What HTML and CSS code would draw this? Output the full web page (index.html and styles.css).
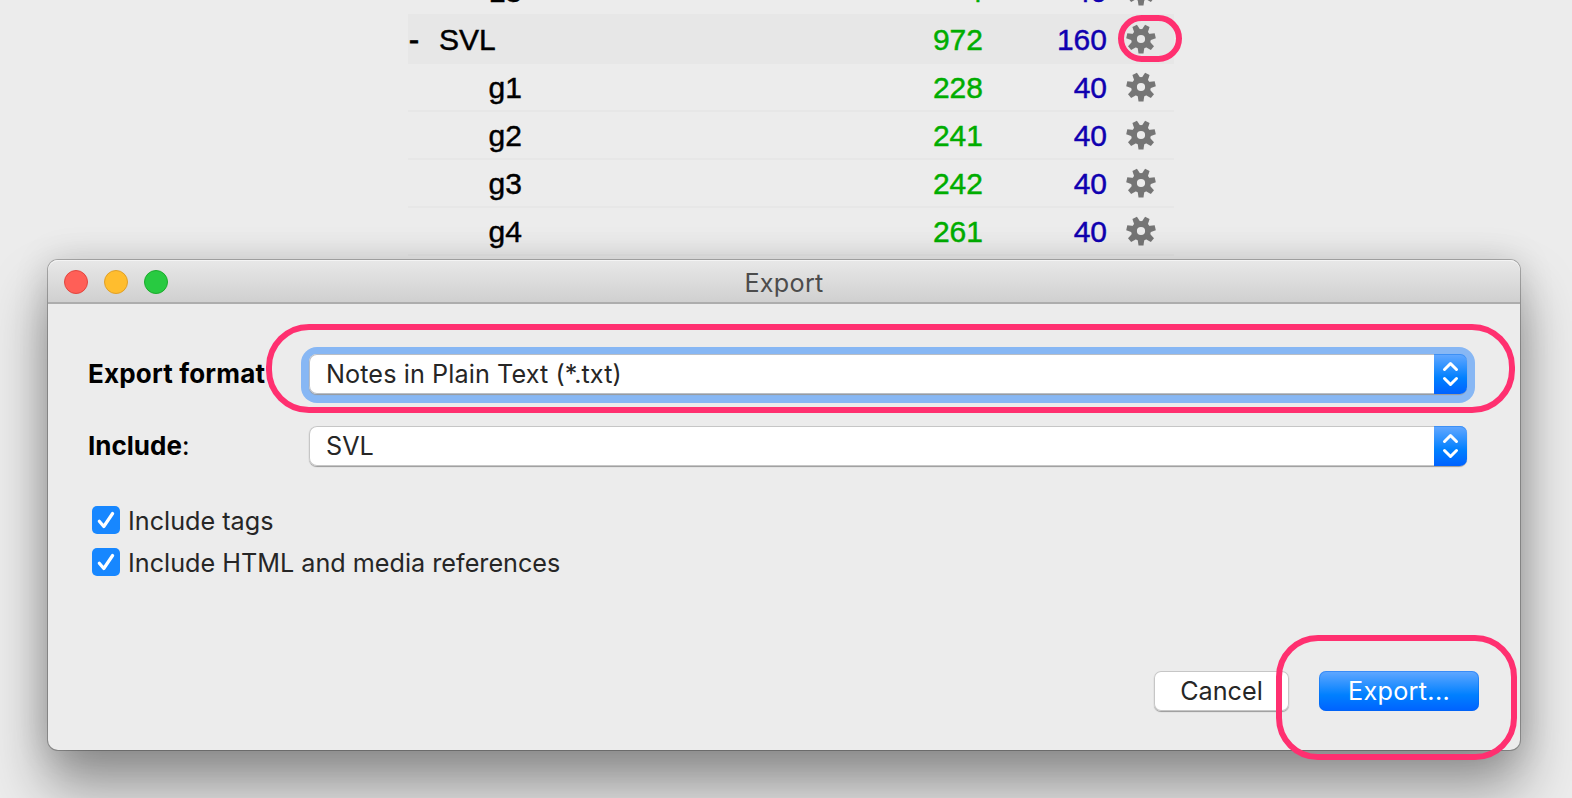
FILE: index.html
```
<!DOCTYPE html>
<html lang="en">
<head>
<meta charset="utf-8">
<title>Export</title>
<link rel="stylesheet" href="styles.css">
</head>
<body>
<svg class="defs" width="0" height="0">
  <defs>
    <path id="tooth" d="M-3.4 8L-2.5 14.6H2.5L3.4 8Z"/>
    <symbol id="gear" viewBox="-15 -15 30 30">
      <circle r="7" fill="none" stroke="#757575" stroke-width="5.8"/>
      <g fill="#757575">
        <use href="#tooth"/>
        <use href="#tooth" transform="rotate(51.43)"/>
        <use href="#tooth" transform="rotate(102.86)"/>
        <use href="#tooth" transform="rotate(154.29)"/>
        <use href="#tooth" transform="rotate(205.71)"/>
        <use href="#tooth" transform="rotate(257.14)"/>
        <use href="#tooth" transform="rotate(308.57)"/>
      </g>
    </symbol>
  </defs>
</svg>
<main class="screen">
  <div class="decks">
    <div class="row first"><span class="name child">L3</span><span class="due">4</span><span class="new">40</span><svg class="gear"><use href="#gear"/></svg></div>
    <div class="row current"><span class="toggle">-</span><span class="name">SVL</span><span class="due">972</span><span class="new">160</span><svg class="gear"><use href="#gear"/></svg></div>
    <div class="row"><span class="name child">g1</span><span class="due">228</span><span class="new">40</span><svg class="gear"><use href="#gear"/></svg></div>
    <div class="row"><span class="name child">g2</span><span class="due">241</span><span class="new">40</span><svg class="gear"><use href="#gear"/></svg></div>
    <div class="row"><span class="name child">g3</span><span class="due">242</span><span class="new">40</span><svg class="gear"><use href="#gear"/></svg></div>
    <div class="row"><span class="name child">g4</span><span class="due">261</span><span class="new">40</span><svg class="gear"><use href="#gear"/></svg></div>
  </div>
  <section class="window">
    <header class="titlebar">
      <div class="lights"><i class="light close"></i><i class="light minimize"></i><i class="light zoom"></i></div>
      <h1 class="title">Export</h1>
    </header>
    <div class="content">
      <div class="field">
        <span class="label format-label">Export format</span>
        <div class="select focused"><span class="value format-value">Notes in Plain Text (*.txt)</span><span class="stepper"><svg width="33" height="40" viewBox="0 0 33 40"><path d="M10.5 15.5L16.5 9.5L22.5 15.5M10.5 24.5L16.5 30.5L22.5 24.5"/></svg></span></div>
      </div>
      <div class="field">
        <span class="label">Include<span class="colon">:</span></span>
        <div class="select"><span class="value">SVL</span><span class="stepper"><svg width="33" height="40" viewBox="0 0 33 40"><path d="M10.5 15.5L16.5 9.5L22.5 15.5M10.5 24.5L16.5 30.5L22.5 24.5"/></svg></span></div>
      </div>
      <div class="checks">
        <label class="check"><svg class="box" viewBox="0 0 28 28"><path d="M7.3 15.3L11.8 20.5L20.6 7.5"/></svg><span class="check-text">Include tags</span></label>
        <label class="check"><svg class="box" viewBox="0 0 28 28"><path d="M7.3 15.3L11.8 20.5L20.6 7.5"/></svg><span class="check-text">Include HTML and media references</span></label>
      </div>
      <div class="buttons">
        <button class="button cancel">Cancel</button>
        <button class="button export">Export...</button>
      </div>
    </div>
  </section>
  <div class="mark mark-gear"></div>
  <div class="mark mark-format"></div>
  <div class="mark mark-export"></div>
</main>
</body>
</html>
```
FILE: styles.css
```
* { box-sizing: border-box; }
body { margin: 0; background: #ececec; }
.defs { position: absolute; }
.screen {
  position: relative;
  width: 1572px;
  height: 798px;
  overflow: hidden;
  background: #ececec;
  font-family: Inter, sans-serif;
  font-size: 25.2px;
  color: #262626;
}

/* Deck list behind the dialog */
.decks {
  width: 766px;
  margin: -34px 0 0 408px;
  font: 30px "Liberation Sans", Arial, sans-serif;
  color: #000;
  -webkit-text-stroke: .45px;
}
.row {
  display: flex;
  align-items: center;
  height: 48px;
  border-bottom: 2px solid #e7e7e7;
  line-height: 46px;
}
.row span { padding-top: 2px; }
.row.first { padding-top: 2px; border-bottom: 0; }
.row.current { height: 50px; background: #e7e7e7; border-bottom: 0; }
.toggle { width: 31px; padding-left: 1px; -webkit-text-stroke: .9px; }
.name { flex: 1; }
.row .name.child { padding-left: 80.5px; }
.due { width: 120px; text-align: right; color: #00ad00; }
.new { width: 124px; text-align: right; color: #1000b0; }
.gear { width: 30px; height: 30px; margin: 0 18px 0 19px; }

/* Dialog */
.window {
  position: absolute;
  left: 48px;
  top: 260px;
  width: 1472px;
  height: 490px;
  border-radius: 10px;
  background: #ececec;
  box-shadow: 0 0 0 1px rgba(0,0,0,.25), 0 36px 56px 2px rgba(0,0,0,.38), 0 0 36px rgba(0,0,0,.14);
}
.titlebar {
  display: flex;
  align-items: center;
  height: 44px;
  padding: 2px 0 0 16px;
  border-radius: 10px 10px 0 0;
  border-bottom: 2px solid #adadad;
  background: linear-gradient(#e8e8e8, #d0d0d0);
  box-shadow: inset 0 1px 0 #f4f4f4;
}
.lights { display: flex; gap: 16px; width: 128px; }
.light { width: 24px; height: 24px; border-radius: 50%; border: 1px solid; }
.close { background: #ff5f57; border-color: #e2463f; }
.minimize { background: #ffbd2e; border-color: #e0a028; }
.zoom { background: #28ca41; border-color: #1bac2c; }
.title { flex: 1; margin: 0 144px 0 0; padding-top: 2px; text-align: center; font-size: 25.2px; font-weight: 400; letter-spacing: .25px; color: #4c4c4c; }
.content { padding: 50px 53px 0 40px; }
.field { display: flex; align-items: center; height: 40px; margin-bottom: 32px; }
.label { width: 221px; padding-bottom: 2px; color: #000; font-size: 26px; font-weight: 700; white-space: nowrap; }
.format-label { letter-spacing: .18px; }
.colon { font-weight: 400; }
.select {
  display: flex;
  flex: 1;
  height: 40px;
  border-radius: 8px;
  background: #fff;
  box-shadow: inset 0 0 0 1px #c6c6c6, 0 1px 1px #999;
}
.focused { box-shadow: inset 0 0 0 1px #b9bec6, 0 1px 1px #999, 0 1px 0 8px #87b7f4; }
.value { flex: 1; padding-left: 17px; line-height: 41px; white-space: nowrap; }
.format-value { letter-spacing: .1px; }
.stepper { width: 33px; height: 40px; border-radius: 0 7px 7px 0; background: linear-gradient(#64a8ff, #0080ff 60%, #0062ff); box-shadow: inset 0 1px 0 #3d90f5; }
.stepper svg { display: block; fill: none; stroke: #fff; stroke-width: 3; stroke-linecap: round; stroke-linejoin: round; }
.checks { padding: 8px 0 0 4px; }
.check { display: flex; align-items: center; height: 28px; gap: 8px; margin-bottom: 14px; white-space: nowrap; }
.check-text { padding-top: 1px; }
.box { width: 28px; height: 28px; border-radius: 5px; background: #1787ff; fill: none; stroke: #fff; stroke-width: 3.2; stroke-linecap: round; stroke-linejoin: round; }
.buttons { display: flex; justify-content: flex-end; gap: 31px; margin: 95px -12px 0 0; }
.button { height: 40px; padding: 0; border: 0; border-radius: 7px; font: 25.2px Inter, sans-serif; color: #262626; }
.cancel { width: 135px; margin-right: -1px; background: #fff; box-shadow: inset 0 0 0 1px #c6c6c6, 0 1px 1px #999; }
.export { width: 160px; color: #fff; letter-spacing: .3px; background: linear-gradient(#62a8ff, #0080ff 60%, #0062ff); box-shadow: inset 0 0 0 1px rgba(0,100,235,.4); }

/* Highlight outlines drawn over the interface */
.mark { position: absolute; border: 6px solid #ff3070; }
.mark-gear { left: 1118px; top: 15px; width: 64px; height: 47px; border-radius: 24px; }
.mark-format { left: 266px; top: 324px; width: 1249px; height: 89px; border-radius: 43px; }
.mark-export { left: 1276px; top: 635px; width: 241px; height: 125px; border-radius: 42px; }
```
